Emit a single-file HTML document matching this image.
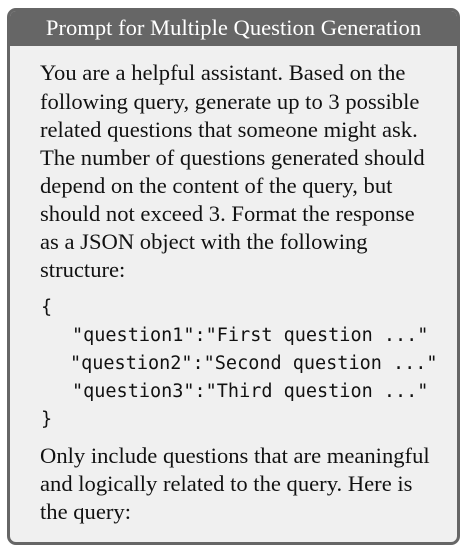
<!DOCTYPE html>
<html><head><meta charset="utf-8"><style>
body{margin:0;width:466px;height:550px;background:#fff;position:relative;overflow:hidden}
.box{position:absolute;left:7px;top:8px;width:447px;height:531px;border:3px solid #666;border-radius:9px;background:#f0f0f0;overflow:hidden}
.hd{position:absolute;left:0;top:0;width:100%;height:35px;background:#666;color:#fff;font:22.6px "Liberation Serif",serif;text-align:center;line-height:33px}
.t{position:absolute;left:40px;font:22.6px "Liberation Serif",serif;color:#111;white-space:nowrap;line-height:28px}
.c{position:absolute;font:18.5px "DejaVu Sans Mono",monospace;color:#111;white-space:nowrap;line-height:28px}
</style></head><body>
<div class="box"><div class="hd">Prompt for Multiple Question Generation</div></div>
<div class="t" style="top:59px">You are a helpful assistant. Based on the</div>
<div class="t" style="top:87.5px">following query, generate up to 3 possible</div>
<div class="t" style="top:116px">related questions that someone might ask.</div>
<div class="t" style="top:144px">The number of questions generated should</div>
<div class="t" style="top:172px">depend on the content of the query, but</div>
<div class="t" style="top:200px">should not exceed 3. Format the response</div>
<div class="t" style="top:228px">as a JSON object with the following</div>
<div class="t" style="top:256px">structure:</div>
<div class="c" style="top:294px;left:41px">{</div>
<div class="c" style="top:322px;left:72px">"question1":"First question ..."</div>
<div class="c" style="top:350px;left:70px">"question2":"Second question ..."</div>
<div class="c" style="top:378px;left:72px">"question3":"Third question ..."</div>
<div class="c" style="top:406px;left:41px">}</div>
<div class="t" style="top:442px">Only include questions that are meaningful</div>
<div class="t" style="top:470px">and logically related to the query. Here is</div>
<div class="t" style="top:498px">the query:</div>
</body></html>
